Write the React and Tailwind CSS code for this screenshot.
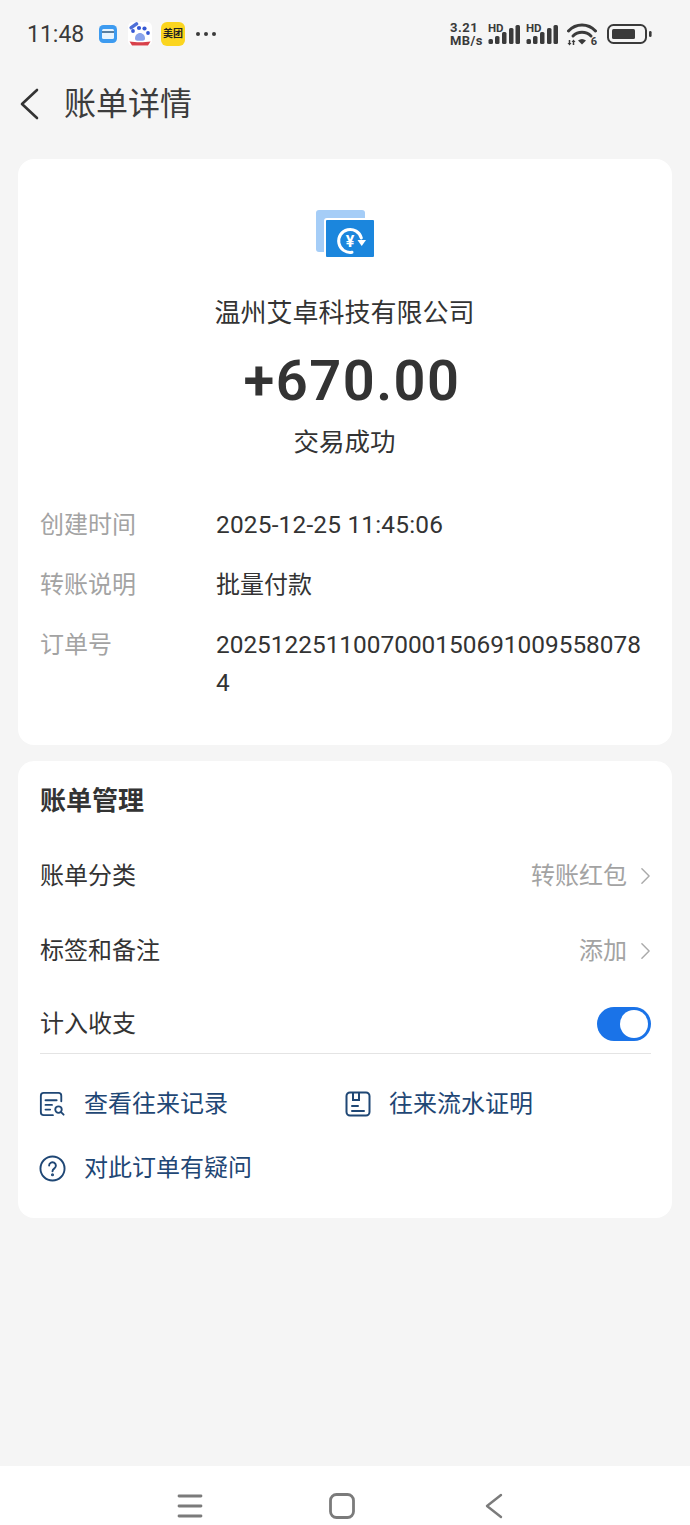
import React from 'react';

const FONT = "font-['Roboto','Noto_Sans_CJK_SC',sans-serif]";

// Barres de signal du bandeau d'état
const Signal = () => (
  <div className="relative h-[24px] w-[33px]">
    <span className="absolute left-0 top-[1px] text-[11.500px] leading-[11px] font-bold text-[#3a3a3a]">HD</span>
    <svg viewBox="0 0 33 24" className="absolute inset-0 h-[24px] w-[33px]" fill="#3a3a3a">
      <rect x="0.500" y="17" width="4.500" height="5" rx="1.500" />
      <rect x="7" y="14" width="4.500" height="8" rx="1.500" />
      <rect x="14" y="10" width="4.500" height="12" rx="1.500" />
      <rect x="21" y="6" width="4.500" height="16" rx="1.500" />
      <rect x="27.500" y="3" width="4.500" height="19" rx="1.500" />
    </svg>
  </div>
);

const Wifi = () => (
  <div className="relative h-[24px] w-[30px]">
    <svg viewBox="0 0 30 24" className="h-[24px] w-[30px]" fill="none" stroke="#3a3a3a" strokeWidth="3" strokeLinecap="round">
      <path d="M1.500 9C9 1 21 1 28.500 9" />
      <path d="M6 14C11 9 19 9 24 14" />
      <path d="M11 18.500Q15 15.500 19 18.500L15 22.500Z" fill="#3a3a3a" stroke="none" />
      <path d="M2.500 18v3M6.500 20v3" strokeWidth="1.500" strokeLinecap="butt" />
      <path d="M0.500 21h4l-2 2.500zM4.500 20h4l-2-2.500z" fill="#3a3a3a" stroke="none" />
    </svg>
    <span className="absolute right-0 bottom-[-1px] text-[11px] leading-[10px] font-bold text-[#3a3a3a]">6</span>
  </div>
);

const Battery = () => (
  <svg viewBox="0 0 46 20" className="h-[20px] w-[46px]" fill="none">
    <rect x="1" y="1" width="38" height="18" rx="5.500" stroke="#3a3a3a" strokeWidth="2" />
    <rect x="5" y="5" width="23" height="10" rx="1.500" fill="#3a3a3a" />
    <rect x="42" y="7" width="2.600" height="6" rx="1.300" fill="#3a3a3a" />
  </svg>
);

// Icônes des notifications
const WalletNotif = () => (
  <svg viewBox="0 0 18 18" className="h-[18px] w-[18px]">
    <rect width="18" height="18" rx="4.500" fill="#3d9bf0" />
    <rect x="3" y="4" width="12" height="10" rx="1.500" fill="#e8f4fe" />
    <rect x="3" y="6" width="12" height="2" fill="#5a7fa0" />
  </svg>
);

const PawNotif = () => (
  <svg viewBox="0 0 24 24" className="h-[24px] w-[24px]">
    <rect width="24" height="24" rx="5" fill="#ffffff" />
    <rect x="1" y="2" width="10" height="3.500" rx="1.750" fill="#4d6fd8" transform="rotate(-35 6 4)" />
    <circle cx="5" cy="9" r="1.900" fill="#3558d4" />
    <circle cx="11" cy="6" r="2.100" fill="#3558d4" />
    <circle cx="16.500" cy="6.500" r="2.100" fill="#3558d4" />
    <circle cx="20" cy="11" r="1.900" fill="#3558d4" />
    <path d="M7 16.500c0-3.200 2.300-5.500 5-5.500s5 2.300 5 5.500c0 1.600-1.100 2.200-2.400 2.200H9.400C8.100 18.700 7 18.100 7 16.500z" fill="#8aa4ec" />
    <path d="M1.500 19.500c6 1 15 1 21 0l-2.500 4h-16z" fill="#d8404a" />
  </svg>
);

const DocSearchIcon = () => (
  <svg viewBox="0 0 28 28" className="ml-[-1px] h-[26px] w-[26px]" fill="none" stroke="#1f4775" strokeWidth="2" strokeLinecap="round">
    <path d="M24 11V5a3 3 0 0 0-3-3H5a3 3 0 0 0-3 3v18a3 3 0 0 0 3 3h10" />
    <path d="M7 10h12M7 15h7M7 20h5" />
    <circle cx="21" cy="20" r="3.500" />
    <path d="M24 23l2.500 2.500" />
  </svg>
);

const ProofIcon = () => (
  <svg viewBox="0 0 26 26" className="h-[26px] w-[26px]" fill="none" stroke="#1f4775" strokeWidth="2" strokeLinecap="round">
    <rect x="1.500" y="1.500" width="23" height="23" rx="3.500" />
    <path d="M8 2v7h6V2" />
    <path d="M7 15h6M7 20h12" />
  </svg>
);

const HelpIcon = () => (
  <svg viewBox="0 0 28 28" className="ml-[-1px] h-[27px] w-[27px]" fill="none" stroke="#1f4775" strokeWidth="2" strokeLinecap="round">
    <circle cx="14" cy="14" r="12.500" />
    <path d="M10.500 11a3.500 3.500 0 1 1 5.500 2.900c-1.300.9-2 1.500-2 3" />
    <circle cx="14" cy="20.500" r="0.600" fill="#1f4775" />
  </svg>
);

const Chevron = () => (
  <svg viewBox="0 0 12 20" className="ml-[13px] h-[18px] w-[11px]" fill="none" stroke="#aaaaaa" strokeWidth="1.600" strokeLinecap="round" strokeLinejoin="round">
    <path d="M2 2l8 8-8 8" />
  </svg>
);

const InfoRow = ({ label, children }) => (
  <div className="flex">
    <div className="w-[176px] shrink-0 text-[24px] text-[#a3a3a3]">{label}</div>
    <div className="min-w-0 flex-1 break-all">{children}</div>
  </div>
);

const SettingRow = ({ label, value }) => (
  <div className="flex h-[75px] items-center justify-between">
    <span>{label}</span>
    <span className="flex items-center text-[#a3a3a3]">
      {value}
      <Chevron />
    </span>
  </div>
);

const App = () => {
  return (
    <div className={`${FONT} flex h-[1525px] w-[690px] flex-col overflow-hidden bg-[#f5f5f5] text-[24px] text-[#333333]`}>
      {/* Bandeau d'état */}
      <div className="flex h-[68px] shrink-0 items-center justify-between pl-[27px] pr-[37px]">
        <div className="flex items-center">
          <span className="w-[57px] text-[23px] leading-none text-[#3a3a3a]">11:48</span>
          <div className="ml-[15px]"><WalletNotif /></div>
          <div className="ml-[11px]"><PawNotif /></div>
          <div className="ml-[9px] flex h-[24px] w-[24px] items-center justify-center rounded-[6px] bg-[#fbd51f] text-[10px] font-bold leading-none text-[#222222]">美团</div>
          <div className="ml-[11px] flex gap-[4px]">
            <span className="h-[4px] w-[4px] rounded-full bg-[#3a3a3a]" />
            <span className="h-[4px] w-[4px] rounded-full bg-[#3a3a3a]" />
            <span className="h-[4px] w-[4px] rounded-full bg-[#3a3a3a]" />
          </div>
        </div>
        <div className="flex items-center">
          <div className="w-[32px] text-[13px] font-bold leading-[13px] text-[#3a3a3a]">
            <div className="tracking-[0.5px]">3.21</div>
            <div className="tracking-[0.4px]">MB/s</div>
          </div>
          <div className="ml-[6px]"><Signal /></div>
          <div className="ml-[5px]"><Signal /></div>
          <div className="ml-[8px]"><Wifi /></div>
          <div className="ml-[10px]"><Battery /></div>
        </div>
      </div>

      {/* En-tête */}
      <div className="flex h-[70px] shrink-0 items-center pl-[19px] pt-[2px]">
        <svg viewBox="0 0 20 32" className="h-[32px] w-[20px]" fill="none" stroke="#333333" strokeWidth="2.600" strokeLinecap="round" strokeLinejoin="round">
          <path d="M18 2L3 16l15 14" />
        </svg>
        <h1 className="ml-[25px] text-[32px] font-normal text-[#3c3c3c]">账单详情</h1>
      </div>

      {/* Carte principale */}
      <div className="mx-[18px] mt-[21px] h-[586px] shrink-0 rounded-[16px] bg-white pl-[22px] pr-[23px]">
        <div className="flex flex-col items-center">
          <svg viewBox="0 0 62 52" className="mt-[49px] h-[52px] w-[62px]">
            <rect x="2" y="2" width="49" height="42" rx="3" fill="#a5cdf7" />
            <rect x="11" y="11" width="50" height="39" rx="2" fill="#1b86dd" stroke="#ffffff" strokeWidth="2" />
            <path d="M38 44.300A11.500 11.500 0 1 1 47.300 30" fill="none" stroke="#ffffff" strokeWidth="3" strokeLinecap="round" />
            <path d="M43.500 32h8.500l-4.300 6z" fill="#ffffff" />
            <text x="36" y="39" textAnchor="middle" fontSize="16" fontWeight="700" fill="#ffffff">¥</text>
          </svg>
          <div className="mt-[35px] text-[26px] leading-[36px]">温州艾卓科技有限公司</div>
          <div className="ml-[15px] mt-[15px] text-[56px] font-semibold leading-[70px] tracking-[1.500px]">+670.00</div>
          <div className="mt-[8px] text-[25.500px] leading-[36px]">交易成功</div>
        </div>
        <div className="mt-[46px] flex flex-col gap-[22px] text-[24.400px] leading-[38px]">
          <InfoRow label="创建时间"><span className="tracking-[0.2px]">2025-12-25 11:45:06</span></InfoRow>
          <InfoRow label="转账说明"><span className="text-[24px]">批量付款</span></InfoRow>
          <InfoRow label="订单号">20251225110070001506910095580784</InfoRow>
        </div>
      </div>

      {/* Gestion de la facture */}
      <div className="mx-[18px] mt-[16px] h-[457px] shrink-0 rounded-[16px] bg-white pl-[22px] pr-[21px]">
        <div className="pt-[22px] text-[26px] font-bold leading-[36px]">账单管理</div>
        <div className="mt-[19px]">
          <SettingRow label="账单分类" value="转账红包" />
          <SettingRow label="标签和备注" value="添加" />
          <div className="flex h-[66px] items-center justify-between border-b border-[#e4e4e4] pt-[6px]">
            <span>计入收支</span>
            <div className="flex h-[34px] w-[54px] items-center justify-end rounded-full bg-[#1a73e8] pr-[3px]">
              <span className="h-[28px] w-[28px] rounded-full bg-white" />
            </div>
          </div>
        </div>
        <div className="text-[#1f4775]">
          <div className="flex h-[64px] items-center pt-[36px]">
            <div className="flex w-[305px] items-center gap-[19px]">
              <DocSearchIcon />
              <span>查看往来记录</span>
            </div>
            <div className="flex items-center gap-[18px]">
              <ProofIcon />
              <span>往来流水证明</span>
            </div>
          </div>
          <div className="mt-[18px] flex h-[64px] items-center gap-[18px]">
            <HelpIcon />
            <span>对此订单有疑问</span>
          </div>
        </div>
      </div>

      <div className="flex-1" />

      {/* Barre de navigation */}
      <div className="flex h-[59px] shrink-0 items-center gap-[126px] bg-white pl-[177px] pt-[21px]">
        <svg viewBox="0 0 26 24" className="h-[24px] w-[26px]" fill="none" stroke="#7b7b7b" strokeWidth="2.800" strokeLinecap="round">
          <path d="M2 2h22M2 12h22M2 22h22" />
        </svg>
        <svg viewBox="0 0 26 26" className="h-[26px] w-[26px]" fill="none" stroke="#7b7b7b" strokeWidth="2.800">
          <rect x="1.500" y="1.500" width="23" height="23" rx="6" />
        </svg>
        <svg viewBox="0 0 18 26" className="ml-[4px] h-[26px] w-[18px]" fill="none" stroke="#7b7b7b" strokeWidth="2.400" strokeLinecap="round" strokeLinejoin="round">
          <path d="M16 2L2 13l14 11" />
        </svg>
      </div>
    </div>
  );
};

export default App;
